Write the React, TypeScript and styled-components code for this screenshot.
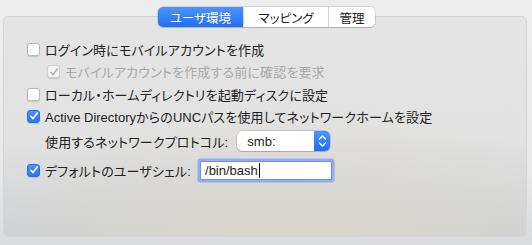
import * as React from 'react';
import styled, { createGlobalStyle } from 'styled-components';

const GlobalStyle = createGlobalStyle`
  html, body {
    margin: 0;
    padding: 0;
  }
  body {
    font-family: 'Liberation Sans', 'Noto Sans CJK JP', sans-serif;
    -webkit-font-smoothing: antialiased;
  }
`;

const Window = styled.div`
  width: 532px;
  height: 245px;
  box-sizing: border-box;
  padding: 7px 5px 0 3px;
  background: linear-gradient(180deg, #ededed 0%, #e8e8e8 70%, #d9dadc 100%);
  display: flex;
  flex-direction: column;
  overflow: hidden;
`;

const TabBar = styled.div`
  display: flex;
  justify-content: center;
  margin-left: 3px;
  margin-bottom: -11px;
  position: relative;
  z-index: 1;
`;

const Segmented = styled.div`
  display: flex;
  height: 20px;
  border-radius: 5px;
  background: #fff;
  box-shadow: 0 0 0 0.5px rgba(0, 0, 0, 0.22), 0 1px 1px rgba(0, 0, 0, 0.12);
  overflow: hidden;
`;

const Tab = styled.div<{ $active?: boolean; $w: number }>`
  width: ${(p) => p.$w}px;
  display: flex;
  align-items: center;
  justify-content: center;
  font-size: 12.5px;
  font-feature-settings: 'palt';
  color: ${(p) => (p.$active ? '#fff' : '#222')};
  background: ${(p) => (p.$active ? 'linear-gradient(180deg, #4f94fa 0%, #1f6ff5 100%)' : '#fff')};
  & + & {
    border-left: 1px solid #d8d8d8;
  }
`;

const Panel = styled.div`
  height: 221px;
  box-sizing: border-box;
  border: 1px solid #d5d5d5;
  border-radius: 5px;
  background: radial-gradient(ellipse 60% 60% at 55% 100%, #d9d6cc 0%, rgba(217, 214, 204, 0) 100%),
    linear-gradient(180deg, #e4e4e4 0%, #e2e2e2 55%, #cfd1d4 100%);
  padding: 21px 0 0 23px;
  display: flex;
  flex-direction: column;
`;

const Row = styled.div<{ $indent?: number; $h: number }>`
  display: flex;
  align-items: center;
  height: ${(p) => p.$h}px;
  padding-left: ${(p) => p.$indent ?? 0}px;
  gap: 5px;
`;

const Label = styled.span<{ $disabled?: boolean }>`
  font-size: 13px;
  font-feature-settings: 'palt';
  letter-spacing: 0.15px;
  color: ${(p) => (p.$disabled ? '#a9a9a9' : '#222')};
  white-space: nowrap;
`;

const Latin = styled.span`
  font-size: 13px;
  letter-spacing: 0;
`;

const Box = styled.div<{ $checked?: boolean; $disabled?: boolean }>`
  width: 13px;
  height: 13px;
  box-sizing: border-box;
  border-radius: 3px;
  flex: none;
  display: flex;
  align-items: center;
  justify-content: center;
  background: ${(p) =>
    p.$disabled ? '#f3f3f3' : p.$checked ? 'linear-gradient(180deg, #4d92fb 0%, #2a74f5 100%)' : '#fff'};
  border: ${(p) =>
    p.$disabled ? '1px solid #cfcfcf' : p.$checked ? '1px solid #2a6fe6' : '1px solid #b9b9b9'};
  box-shadow: 0 0.5px 1px rgba(0, 0, 0, 0.12);
`;

const Check: React.FC<{ color: string }> = ({ color }) => (
  <svg width="10" height="10" viewBox="0 0 10 10">
    <path d="M1.8 5.3 L4 7.6 L8.3 2" fill="none" stroke={color} strokeWidth="1.6" strokeLinecap="round" strokeLinejoin="round" />
  </svg>
);

const Checkbox: React.FC<{ checked?: boolean; disabled?: boolean }> = ({ checked, disabled }) => (
  <Box $checked={checked} $disabled={disabled}>
    {checked && <Check color={disabled ? '#b5b5b5' : '#fff'} />}
  </Box>
);

const Popup = styled.div`
  margin-left: 4px;
  width: 93px;
  height: 20px;
  box-sizing: border-box;
  display: flex;
  align-items: stretch;
  background: #fff;
  border-radius: 5px;
  box-shadow: 0 0 0 0.5px rgba(0, 0, 0, 0.25), 0 1px 1px rgba(0, 0, 0, 0.12);
  overflow: hidden;
`;

const PopupText = styled.span`
  flex: 1;
  display: flex;
  align-items: center;
  padding-left: 10px;
  font-size: 13px;
  color: #222;
`;

const Stepper = styled.div`
  width: 16px;
  display: flex;
  align-items: center;
  justify-content: center;
  background: linear-gradient(180deg, #4f94fa 0%, #1f6ff5 100%);
`;

const Field = styled.div`
  margin-left: 4px;
  width: 132px;
  height: 19px;
  box-sizing: border-box;
  display: flex;
  align-items: center;
  padding-left: 4px;
  background: #fff;
  border: 1px solid #6f8fe8;
  box-shadow: 0 0 0 2.5px #96acf0;
  border-radius: 1px;
  font-size: 13px;
  color: #1d1d1d;
`;

const Caret = styled.span`
  width: 1px;
  height: 15px;
  background: #000;
  margin-left: 1px;
`;

export default function App() {
  return (
    <>
      <GlobalStyle />
      <Window>
        <TabBar>
          <Segmented>
            <Tab $active $w={85}>ユーザ環境</Tab>
            <Tab $w={84}>マッピング</Tab>
            <Tab $w={46}>管理</Tab>
          </Segmented>
        </TabBar>
        <Panel>
          <Row $h={22}>
            <Checkbox />
            <Label>ログイン時にモバイルアカウントを作成</Label>
          </Row>
          <Row $h={23} $indent={20}>
            <Checkbox checked disabled />
            <Label $disabled>モバイルアカウントを作成する前に確認を要求</Label>
          </Row>
          <Row $h={22}>
            <Checkbox />
            <Label>ローカル・ホームディレクトリを起動ディスクに設定</Label>
          </Row>
          <Row $h={22}>
            <Checkbox checked />
            <Label>
              <Latin>Active Directory</Latin>からの<Latin>UNC</Latin>パスを使用してネットワークホームを設定
            </Label>
          </Row>
          <Row $h={28} $indent={18}>
            <Label>使用するネットワークプロトコル:</Label>
            <Popup>
              <PopupText>smb:</PopupText>
              <Stepper>
                <svg width="9" height="14" viewBox="0 0 9 14">
                  <path d="M1.5 5 L4.5 2 L7.5 5 M1.5 9 L4.5 12 L7.5 9" fill="none" stroke="#fff" strokeWidth="1.3" strokeLinecap="round" strokeLinejoin="round" />
                </svg>
              </Stepper>
            </Popup>
          </Row>
          <Row $h={30}>
            <Checkbox checked />
            <Label>デフォルトのユーザシェル:</Label>
            <Field>
              /bin/bash
              <Caret />
            </Field>
          </Row>
        </Panel>
      </Window>
    </>
  );
}
